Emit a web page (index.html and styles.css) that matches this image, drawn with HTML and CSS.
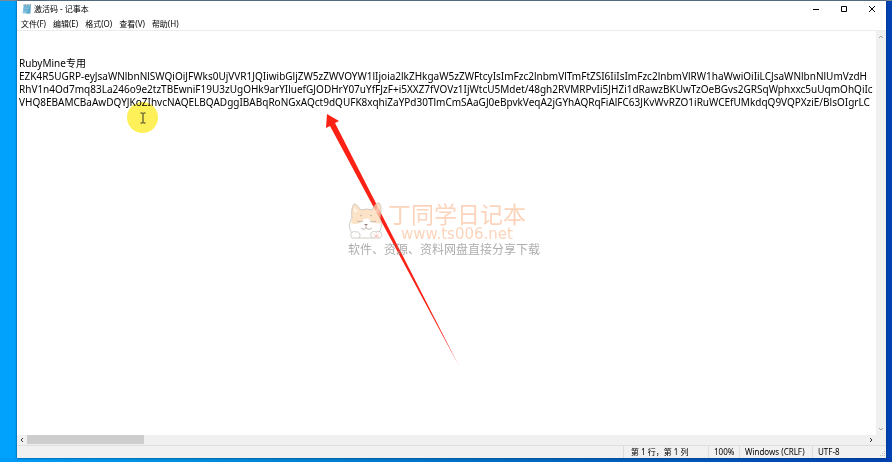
FILE: index.html
```html
<!DOCTYPE html>
<html lang="zh-CN">
<head>
<meta charset="utf-8">
<title>激活码 - 记事本</title>
<link rel="stylesheet" href="styles.css">
</head>
<body>
<main class="window">
  <header class="titlebar">
    <svg class="app-icon" viewBox="0 0 10 10" aria-hidden="true">
      <path d="M1.5 1h7.5l-.6 8.4H.6z" fill="#8ecbe6"/>
      <path d="M2 2.2h6M1.8 3.8h6M1.6 5.4h6M1.4 7h6" stroke="#4e9bc0" stroke-width=".6"/>
      <path d="M1.6.8H9" stroke="#717b80" stroke-width="1" stroke-dasharray="1 .6"/>
      <path d="M8.6 1.4l-.4 8H4z" fill="#5aa9cc"/>
    </svg>
    <h1 class="title">激活码 - 记事本</h1>
    <div class="controls">
      <button type="button" aria-label="最小化"><svg viewBox="0 0 8 8"><path d="M1 4.5h6"/></svg></button>
      <button type="button" aria-label="最大化"><svg viewBox="0 0 8 8"><path d="M1.500 1.500h5v5h-5z"/></svg></button>
      <button type="button" aria-label="关闭"><svg viewBox="0 0 8 8"><path d="M1 1l6 6M7 1L1 7"/></svg></button>
    </div>
  </header>
  <nav class="menu">
    <button type="button">文件(F)</button>
    <button type="button">编辑(E)</button>
    <button type="button">格式(O)</button>
    <button type="button">查看(V)</button>
    <button type="button">帮助(H)</button>
  </nav>
  <div class="editor">
    <textarea class="text" wrap="off" spellcheck="false" aria-label="文本编辑器">


RubyMine专用
EZK4R5UGRP-eyJsaWNlbnNlSWQiOiJFWks0UjVVR1JQIiwibGljZW5zZWVOYW1lIjoia2lkZHkgaW5zZWFtcyIsImFzc2lnbmVlTmFtZSI6IiIsImFzc2lnbmVlRW1haWwiOiIiLCJsaWNlbnNlUmVzdH
RhV1n4Od7mq83La246o9e2tzTBEwniF19U3zUgOHk9arYIluefGJODHrY07uYfFJzF+i5XXZ7fVOVz1IjWtcU5Mdet/48gh2RVMRPvIi5JHZi1dRawzBKUwTzOeBGvs2GRSqWphxxc5uUqmOhQiIc
VHQ8EBAMCBaAwDQYJKoZIhvcNAQELBQADggIBABqRoNGxAQct9dQUFK8xqhiZaYPd30TlmCmSAaGJ0eBpvkVeqA2jGYhAQRqFiAlFC63JKvWvRZO1iRuWCEfUMkdqQ9VQPXziE/BlsOIgrLC</textarea>
    <div class="vscroll">
      <button type="button" aria-label="向上滚动"><svg viewBox="0 0 6 6"><path d="M1 4l2-2 2 2"/></svg></button>
      <button type="button" aria-label="向下滚动"><svg viewBox="0 0 6 6"><path d="M1 2l2 2 2-2"/></svg></button>
    </div>
  </div>
  <div class="hscroll">
    <button type="button" aria-label="向左滚动"><svg viewBox="0 0 6 6"><path d="M4 1L2 3l2 2"/></svg></button>
    <div class="track"><div class="thumb"></div></div>
    <button type="button" aria-label="向右滚动"><svg viewBox="0 0 6 6"><path d="M2 1l2 2-2 2"/></svg></button>
  </div>
  <footer class="status">
    <span class="cell position">第 1 行，第 1 列</span>
    <span class="cell zoom">100%</span>
    <span class="cell eol">Windows (CRLF)</span>
    <span class="cell encoding">UTF-8</span>
    <svg class="grip" viewBox="0 0 6 6" aria-hidden="true"><path d="M5 0h1v1H5zM3 2h1v1H3zM5 2h1v1H5zM1 4h1v1H1zM3 4h1v1H3zM5 4h1v1H5z"/></svg>
  </footer>
</main>

<svg class="arrow" viewBox="0 0 134 254" aria-hidden="true">
  <path d="M1 0L13 7L9 9L133 252L4 12L0 14z" fill="#fb2114"/>
</svg>

<div class="pointer">
  <svg viewBox="0 0 8 12" aria-hidden="true"><path d="M1.500 1h2l.5.5.5-.5h2M4 1.500v9M1.500 11h2l.5-.5.5.5h2"/></svg>
</div>

<aside class="watermark">
  <div class="brand">
    <svg class="dog" viewBox="0 0 36 38" aria-hidden="true">
      <path d="M4 16C3 10 4 4 6 2c2-1 5 4 7 6q6-2 11 0c2-4 5-8 7-7 3 2 2 10 1 15 3 7 1 14-4 17H8C1 30 0 22 4 16z" fill="#fff"/>
      <path d="M4 16C3 10 4 4 6 2c2-1 5 4 7 6q6-2 11 0c2-4 5-8 7-7 3 2 2 10 1 15l1 5c-4 1-9 0-11-3-1-2-5-2-7 0-3 4-8 5-12 3z" fill="#fcd9b4"/>
      <path d="M6 10V5l4 5M27 10l3-6 1 7" fill="#fff4e9"/>
      <path d="M4 16C3 10 4 4 6 2c2-1 5 4 7 6q6-2 11 0c2-4 5-8 7-7 3 2 2 10 1 15 3 7 1 14-4 17M4 16C0 22 1 27 4 31" fill="none" stroke="#b5a99f" stroke-width=".8"/>
      <path d="M9 19q3 2 6 0M22 19q3 2 6 0M12 14l2-1M22 13l2 1M13 26q3 3 5 0 3 3 6 0M18 24v2" fill="none" stroke="#a08a7c" stroke-width=".8"/>
      <path d="M16 22h4l-2 2z" fill="#715b50"/>
      <path d="M4 36c-3-3 0-8 4-6 4-1 5 4 3 6zM24 36c-3-4 0-8 4-6 5-2 8 3 4 6z" fill="#fff" stroke="#b5a99f" stroke-width=".8"/>
      <path d="M11 36h13" stroke="#b5a99f" stroke-width=".8"/>
      <ellipse cx="28.500" cy="34" rx="2" ry="1.500" fill="#f7b9b3"/>
      <path d="M25.500 32h1M28 31h1M30.500 32h1" stroke="#f7b9b3"/>
    </svg>
    <div class="names">
      <span class="name">丁同学日记本</span>
      <span class="site">www.ts006.net</span>
    </div>
  </div>
  <p class="tagline">软件、资源、资料网盘直接分享下载</p>
</aside>
</body>
</html>
```

FILE: styles.css
```css
* { box-sizing: border-box; }

body {
  margin: 0;
  height: 100vh;
  padding: 1px 6px 4px 17px;
  position: relative;
  overflow: hidden;
  background:
    linear-gradient(90deg, #009cf8 0, #0090e0 20%, #0068c0 60%, #0040b0 100%) bottom / 100% 4px no-repeat,
    linear-gradient(#7d8791, #7d8791) top / 100% 1px no-repeat,
    linear-gradient(90deg, #00a2fc 0 17px, #0042b4 17px);
  color: #000;
  font-family: "Noto Sans", "Noto Sans CJK SC", sans-serif;
}

button {
  border: 0;
  padding: 0;
  background: none;
  color: inherit;
  font: inherit;
  display: flex;
  align-items: center;
  justify-content: center;
}

button svg { fill: none; stroke: currentColor; }

.window {
  height: 100%;
  display: flex;
  flex-direction: column;
  background: #fff;
  box-shadow: 0 0 2px #00305c;
}

.titlebar {
  flex: 0 0 16px;
  display: flex;
  align-items: center;
  padding-left: 5px;
}

.app-icon { width: 10px; height: 10px; }

.title {
  margin: 0 auto 0 2px;
  font-size: 8px;
  line-height: 12px;
  font-weight: 400;
}

.controls { display: flex; }
.controls button { width: 28px; height: 16px; }
.controls svg { width: 8px; height: 8px; }

.menu {
  flex: 0 0 14px;
  display: flex;
  gap: 7px;
  padding-left: 4px;
  border-bottom: 1px solid #ececec;
  font-size: 8px;
  line-height: 13px;
}

.editor {
  flex: 1;
  min-height: 0;
  display: flex;
}

.text {
  flex: 1;
  min-width: 0;
  margin: 0 3px 0 2px;
  padding: 0;
  border: 0;
  outline: 0;
  resize: none;
  overflow: hidden;
  background: #fff;
  color: #000;
  font-family: "Noto Sans", "Noto Sans CJK SC", sans-serif;
  font-size: 10px;
  line-height: 13px;
}

.vscroll {
  flex: 0 0 10px;
  display: flex;
  flex-direction: column;
  justify-content: space-between;
  background: #f0f0f0;
  color: #a5a5a5;
}

.vscroll button { height: 12px; }
.vscroll svg, .hscroll svg { width: 6px; height: 6px; }

.hscroll {
  flex: 0 0 10px;
  display: flex;
  padding-right: 10px;
  background: #f0f0f0;
  color: #333;
}

.hscroll button { width: 10px; }
.track { flex: 1; }
.thumb { width: 14%; height: 9px; background: #cdcdcd; }

.status {
  flex: 0 0 13px;
  display: flex;
  justify-content: flex-end;
  position: relative;
  border-top: 1px solid #dedede;
  background: #f1f1f1;
  font-size: 8px;
  line-height: 12px;
}

.cell {
  padding-left: 5px;
  border-left: 1px solid #dcdcdc;
  white-space: nowrap;
}

.position { width: 85px; padding-left: 7px; }
.zoom { width: 31px; }
.eol { width: 73px; }
.encoding { width: 74px; }

.grip {
  position: absolute;
  right: 1px;
  bottom: 1px;
  width: 6px;
  height: 6px;
  fill: #bfbfbf;
}

.arrow {
  position: absolute;
  left: 326px;
  top: 114px;
  width: 134px;
  height: 254px;
}

.pointer {
  position: absolute;
  left: 127px;
  top: 102px;
  width: 31px;
  height: 31px;
  border-radius: 50%;
  display: grid;
  place-items: center;
  background: #fdf058;
  mix-blend-mode: multiply;
}

.pointer svg { width: 8px; height: 12px; fill: none; stroke: #333; }

.watermark {
  position: absolute;
  left: 348px;
  top: 202px;
  opacity: 0.75;
}

.brand { display: flex; gap: 4px; }
.dog { width: 36px; height: 38px; }

.names {
  display: flex;
  flex-direction: column;
  color: #fac6a5;
  white-space: nowrap;
}

.name { font-size: 23px; line-height: 24px; }

.site {
  padding-left: 13px;
  font-family: "DejaVu Sans", sans-serif;
  font-size: 15px;
  line-height: 17px;
}

.tagline {
  margin: 0;
  color: #929292;
  font-size: 12px;
  line-height: 13px;
  white-space: nowrap;
}
```
